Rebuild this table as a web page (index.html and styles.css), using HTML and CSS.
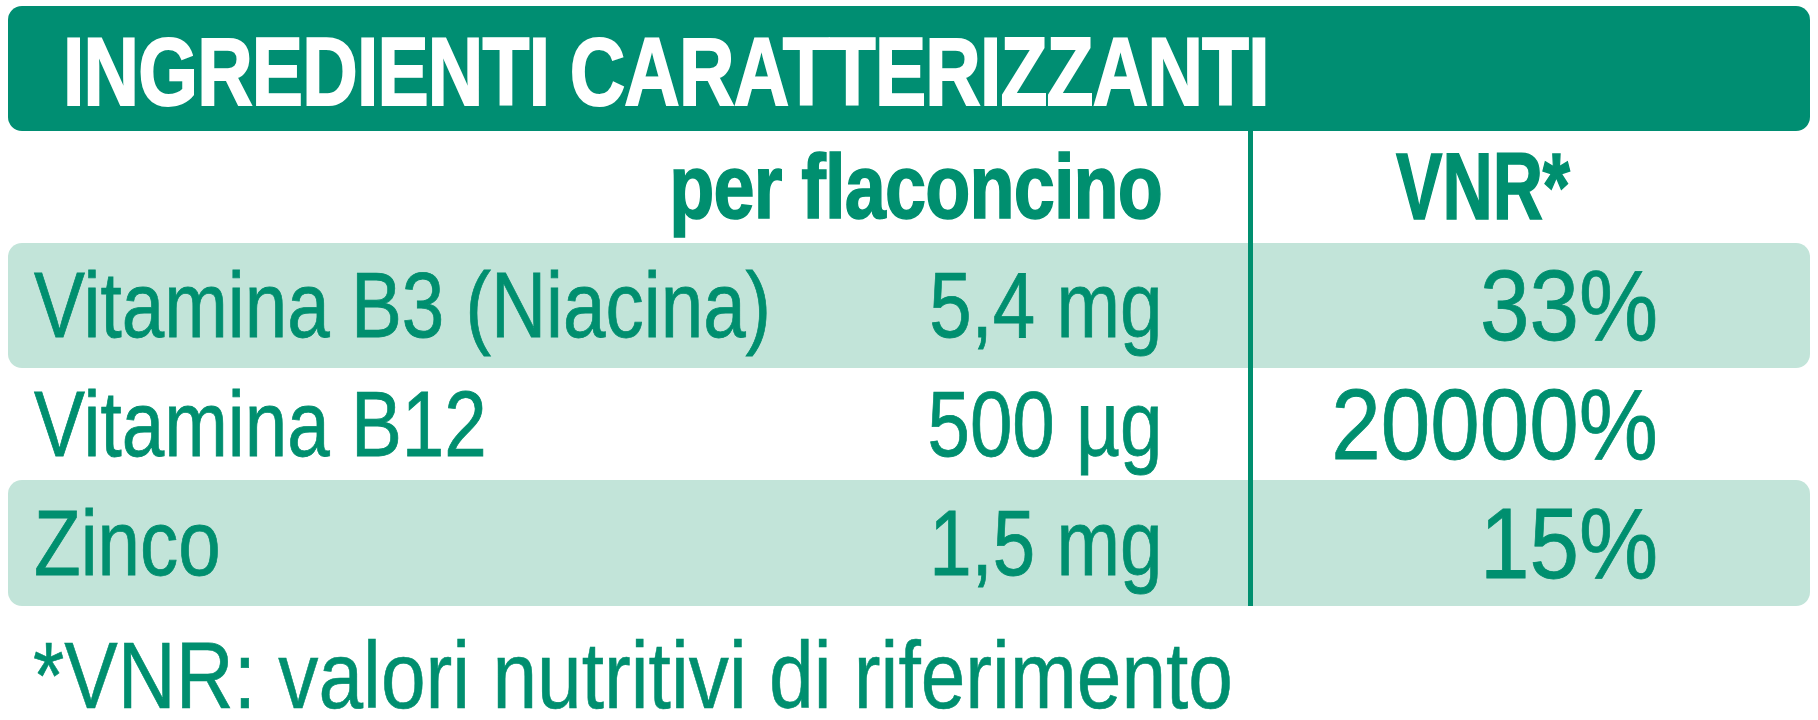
FILE: index.html
```html
<!DOCTYPE html>
<html lang="it">
<head>
<meta charset="utf-8">
<title>Ingredienti caratterizzanti</title>
<link rel="stylesheet" href="styles.css">
</head>
<body>
<div class="panel">
  <div class="title"><span class="title-text">INGREDIENTI CARATTERIZZANTI</span></div>
  <div class="row row-head">
    <div class="left">
      <span class="name"></span>
      <span class="amount head">per flaconcino</span>
    </div>
    <div class="right right-head"><span class="vnr-head">VNR*</span></div>
  </div>
  <div class="row row-a shaded">
    <div class="left">
      <span class="name">Vitamina B3 (Niacina)</span>
      <span class="amount">5,4 mg</span>
    </div>
    <div class="right"><span class="pct">33%</span></div>
  </div>
  <div class="row row-b">
    <div class="left">
      <span class="name">Vitamina B12</span>
      <span class="amount">500 µg</span>
    </div>
    <div class="right"><span class="pct">20000%</span></div>
  </div>
  <div class="row row-c shaded">
    <div class="left">
      <span class="name">Zinco</span>
      <span class="amount">1,5 mg</span>
    </div>
    <div class="right"><span class="pct">15%</span></div>
  </div>
  <div class="note"><span class="note-text">*VNR: valori nutritivi di riferimento</span></div>
</div>
</body>
</html>
```

FILE: styles.css
```css
html, body {
  margin: 0;
  padding: 0;
  background: #ffffff;
  overflow: hidden;
}

.panel {
  padding: 6px 8px 0 8px;
  font-family: "Liberation Sans", Arial, sans-serif;
  color: #008f6f;
}

.title {
  height: 119px;
  padding: 6px 0 0 55px;
  background: #008e72;
  border-radius: 14px;
  color: #ffffff;
  font-weight: 700;
  font-size: 96px;
  line-height: 119px;
  white-space: nowrap;
}

.title-text {
  display: inline-block;
  letter-spacing: -1px;
  -webkit-text-stroke: 2px #ffffff;
  transform: scaleX(0.8);
  transform-origin: left center;
}

.row {
  display: flex;
  white-space: nowrap;
}

.shaded {
  background: #c2e4d9;
  border-radius: 14px;
}

.row-head { height: 112px; line-height: 112px; }
.row-a { height: 125px; line-height: 125px; }
.row-b { height: 112px; line-height: 112px; }
.row-c { height: 126px; line-height: 126px; }

.left {
  width: 1240px;
  display: flex;
  box-sizing: border-box;
  padding: 0 86px 0 26px;
}

.right {
  flex: 1;
  border-left: 5px solid #008f6f;
  display: flex;
  justify-content: flex-end;
  padding-right: 152px;
}

.right-head {
  justify-content: flex-start;
  padding: 0 0 0 143px;
}

.name {
  flex: 1 1 0;
  min-width: 0;
  font-size: 92px;
  -webkit-text-stroke: 0.8px #008f6f;
  transform: scaleX(0.83);
  transform-origin: left center;
}

.amount {
  flex: none;
  font-size: 93px;
  -webkit-text-stroke: 0.8px #008f6f;
  transform: scaleX(0.82);
  transform-origin: right center;
}

.head {
  font-weight: 700;
  font-size: 90px;
  letter-spacing: -1px;
  -webkit-text-stroke: 1.6px #008f6f;
  transform: scaleX(0.82);
}

.vnr-head {
  font-weight: 700;
  font-size: 94px;
  -webkit-text-stroke: 1.6px #008f6f;
  transform: scaleX(0.74);
  transform-origin: left center;
}

.pct {
  font-size: 100px;
  -webkit-text-stroke: 0.8px #008f6f;
  transform: scaleX(0.89);
  transform-origin: right center;
}

.note {
  padding: 24px 0 0 25px;
  font-size: 95px;
  line-height: 90px;
  white-space: nowrap;
}

.note-text {
  display: inline-block;
  -webkit-text-stroke: 0.6px #008f6f;
  transform: scaleX(0.845);
  transform-origin: left center;
}
```
